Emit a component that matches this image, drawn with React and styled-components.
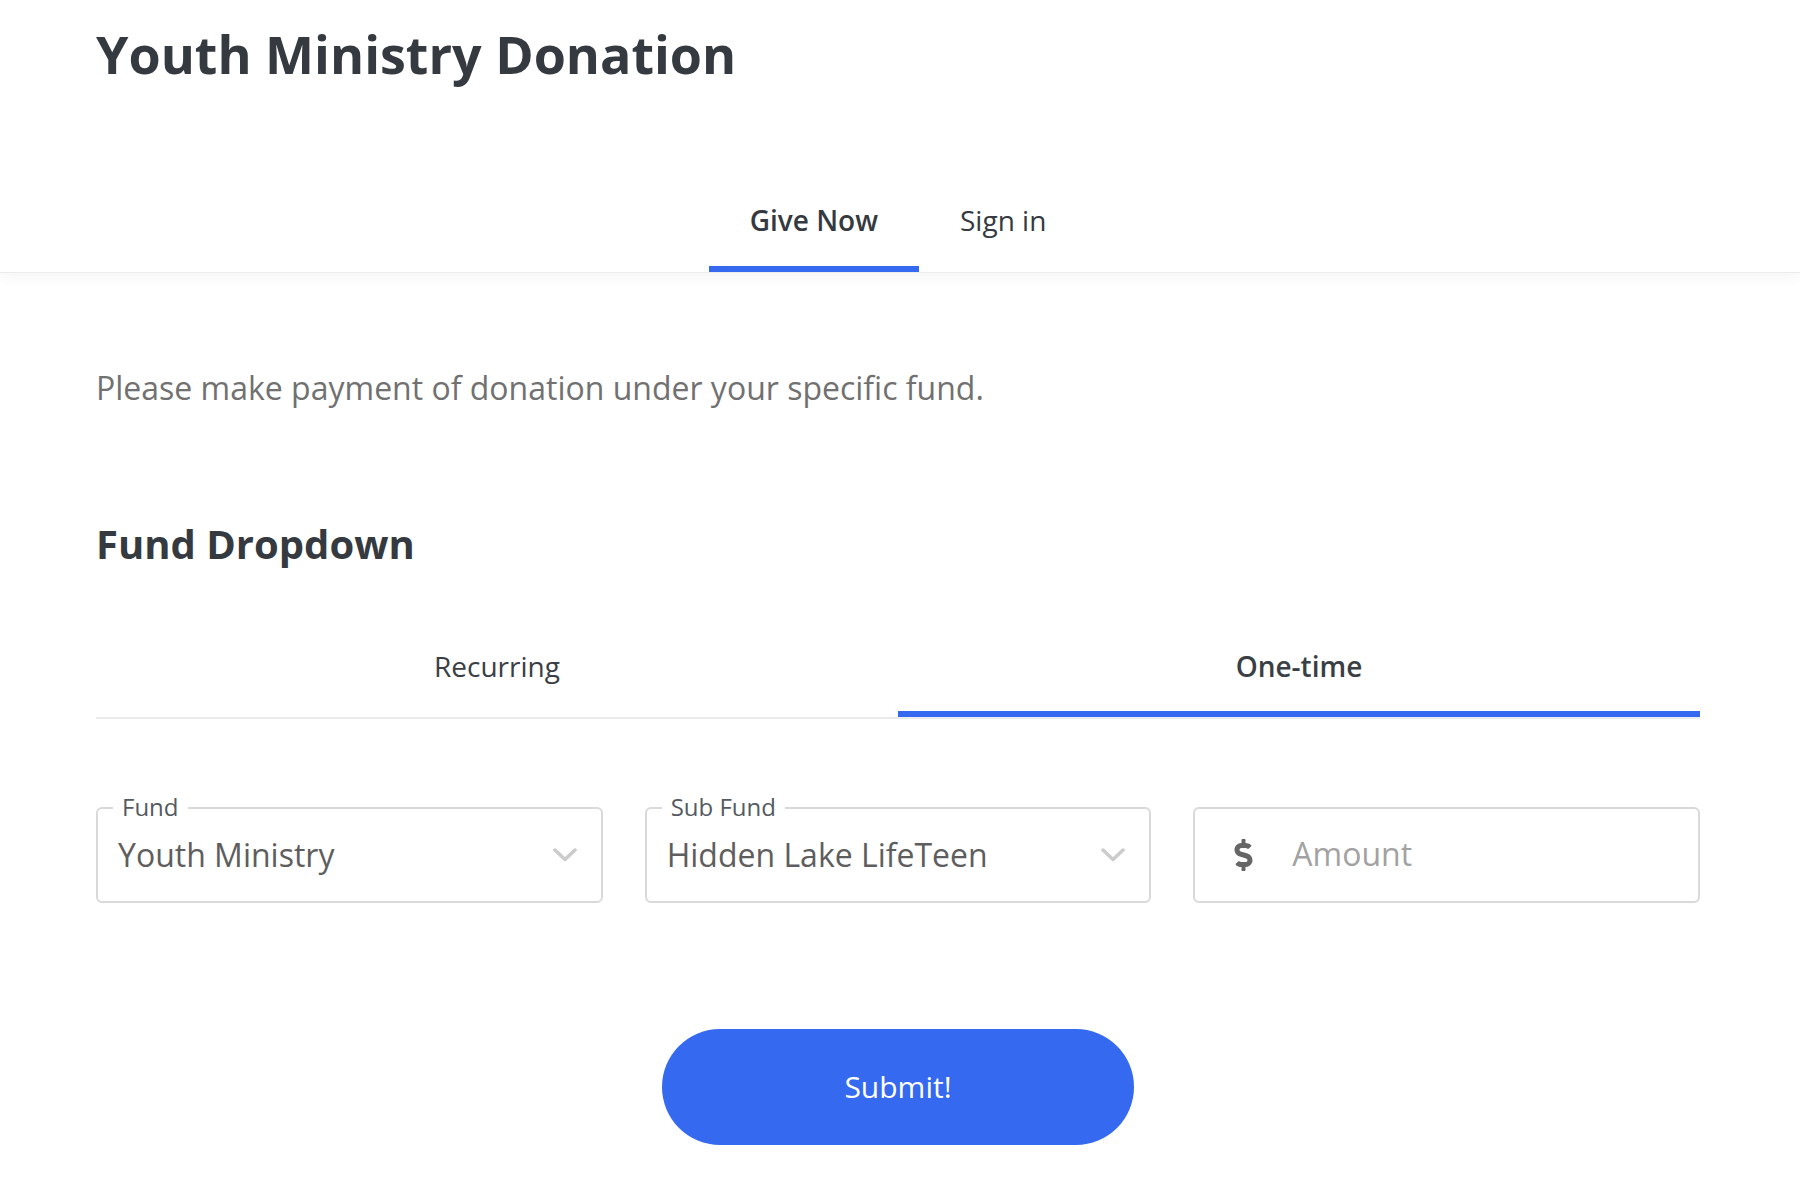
import React, { useState } from "react";
import styled, { createGlobalStyle, css } from "styled-components";
import { FaDollarSign } from "react-icons/fa";

const GlobalStyle = createGlobalStyle`
  html, body {
    margin: 0;
    padding: 0;
    background: #ffffff;
  }
  body {
    font-family: "Open Sans", "Noto Sans", "Liberation Sans", sans-serif;
    color: #353a40;
    -webkit-font-smoothing: antialiased;
  }
  * { box-sizing: border-box; }
`;

const BLUE = "#3469f0";

const Header = styled.header`
  padding: 28px 100px 0 96px;
  border-bottom: 1px solid #ececec;
  box-shadow: 0 4px 14px rgba(0, 0, 0, 0.045);
  background: #fff;
`;

const Title = styled.h1`
  margin: 0;
  font-size: 52px;
  line-height: 1;
  font-weight: 700;
  color: #353a40;
`;

const Nav = styled.nav`
  display: flex;
  justify-content: center;
  margin-top: 126px;
`;

const NavTab = styled.button`
  border: 0;
  background: none;
  font-family: inherit;
  font-size: 28px;
  line-height: 1;
  color: #353a40;
  padding: 0 41px 32px;
  border-bottom: 6px solid transparent;
  cursor: pointer;
  font-weight: 400;
  ${(p) =>
    p.$active &&
    css`
      font-weight: 600;
      border-bottom-color: ${BLUE};
    `}
`;

const Main = styled.main`
  padding: 0 100px 80px 96px;
`;

const Intro = styled.p`
  margin: 99px 0 0;
  font-size: 32px;
  line-height: 1;
  color: #717171;
`;

const SectionTitle = styled.h2`
  margin: 120px 0 0;
  font-size: 40px;
  line-height: 1;
  font-weight: 700;
  color: #353a40;
`;

const TabList = styled.div`
  margin-top: 88px;
  display: grid;
  grid-template-columns: 1fr 1fr;
  border-bottom: 2px solid #ebebeb;
`;

const Tab = styled.button`
  border: 0;
  background: none;
  font-family: inherit;
  font-size: 28px;
  line-height: 1;
  color: #3a3f45;
  padding: 0 0 31px;
  border-bottom: 6px solid transparent;
  cursor: pointer;
  font-weight: 400;
  ${(p) =>
    p.$active &&
    css`
      font-weight: 600;
      border-bottom-color: ${BLUE};
    `}
`;

const FieldRow = styled.div`
  margin-top: 88px;
  display: grid;
  grid-template-columns: repeat(3, minmax(0, 1fr));
  column-gap: 42px;
`;

const Field = styled.div`
  position: relative;
  height: 96px;
  border: 2px solid #d9d9d9;
  border-radius: 6px;
  display: flex;
  align-items: center;
  padding: ${(p) => (p.$icon ? "0 24px 0 39px" : "0 24px 0 20px")};
  background: #fff;
`;

const Legend = styled.span`
  position: absolute;
  top: -14px;
  left: 15px;
  padding: 0 9px;
  background: #fff;
  font-size: 24px;
  line-height: 1;
  color: #555a5f;
`;

const Value = styled.span`
  flex: 1;
  font-size: 32px;
  line-height: 1;
  color: #5e5e5e;
  white-space: nowrap;
`;

const Chevron = styled.svg`
  width: 24px;
  height: 14px;
  flex: none;
`;

const DollarIcon = styled(FaDollarSign)`
  width: 19px;
  height: 32px;
  color: #666;
  flex: none;
  margin-right: 39px;
`;

const AmountInput = styled.input`
  flex: 1;
  min-width: 0;
  width: 100%;
  border: 0;
  outline: none;
  padding: 0 0 3px;
  background: transparent;
  font-family: inherit;
  font-size: 32px;
  line-height: 1;
  color: #5e5e5e;
  &::placeholder {
    color: #a2a2a2;
  }
`;

const Actions = styled.div`
  display: flex;
  justify-content: center;
  margin-top: 126px;
`;

const SubmitButton = styled.button`
  width: 472px;
  height: 116px;
  border: 0;
  border-radius: 58px;
  background: ${BLUE};
  color: #fff;
  font-family: inherit;
  font-size: 30px;
  line-height: 1;
  font-weight: 400;
  cursor: pointer;
`;

function ChevronDown() {
  return (
    <Chevron viewBox="0 0 24 14" aria-hidden="true">
      <polyline
        points="2,2 12,11.5 22,2"
        fill="none"
        stroke="#cbcbcb"
        strokeWidth="3.5"
        strokeLinecap="round"
        strokeLinejoin="round"
      />
    </Chevron>
  );
}

export default function App() {
  const [nav, setNav] = useState("give");
  const [freq, setFreq] = useState("one");
  return (
    <>
      <GlobalStyle />
      <Header>
        <Title>Youth Ministry Donation</Title>
        <Nav>
          <NavTab $active={nav === "give"} onClick={() => setNav("give")}>
            Give Now
          </NavTab>
          <NavTab $active={nav === "sign"} onClick={() => setNav("sign")}>
            Sign in
          </NavTab>
        </Nav>
      </Header>
      <Main>
        <Intro>Please make payment of donation under your specific fund.</Intro>
        <SectionTitle>Fund Dropdown</SectionTitle>
        <TabList>
          <Tab $active={freq === "rec"} onClick={() => setFreq("rec")}>
            Recurring
          </Tab>
          <Tab $active={freq === "one"} onClick={() => setFreq("one")}>
            One-time
          </Tab>
        </TabList>
        <FieldRow>
          <Field>
            <Legend>Fund</Legend>
            <Value>Youth Ministry</Value>
            <ChevronDown />
          </Field>
          <Field>
            <Legend>Sub Fund</Legend>
            <Value>Hidden Lake LifeTeen</Value>
            <ChevronDown />
          </Field>
          <Field $icon>
            <DollarIcon />
            <AmountInput placeholder="Amount" />
          </Field>
        </FieldRow>
        <Actions>
          <SubmitButton>Submit!</SubmitButton>
        </Actions>
      </Main>
    </>
  );
}
